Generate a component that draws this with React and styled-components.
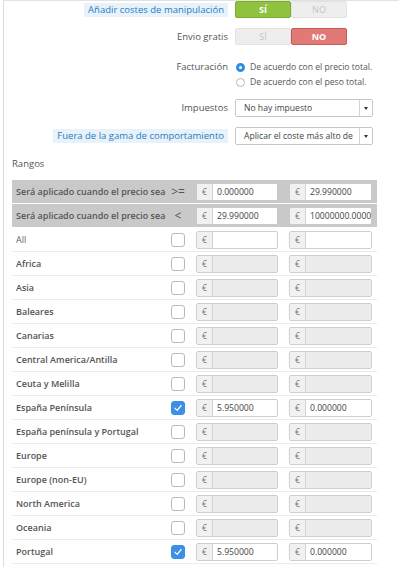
import React from 'react'
import styled, { createGlobalStyle } from 'styled-components'

const GlobalStyle = createGlobalStyle`
  body {
    margin: 0;
    background: #fff;
    font-family: "Open Sans", "Liberation Sans", sans-serif;
    font-size: 9px;
    color: #555;
  }
  * { box-sizing: border-box; }
`

const Panel = styled.div`
  margin-left: 3px;
  border-left: 1px solid #dcdcdc;
  border-top: 1px solid #e2e2e2;
  padding: 0 0 0 8px;
  min-height: 567px;
`

const FormRow = styled.div`
  display: grid;
  grid-template-columns: 216px auto;
  column-gap: 7px;
  align-items: ${p => (p.$top ? 'start' : 'center')};
  margin-top: ${p => p.$mt || 0}px;
`

const Label = styled.div`
  justify-self: end;
  font-size: 9.5px;
  line-height: 14px;
  color: ${p => (p.$hint ? '#2b7bbf' : '#555')};
  background: ${p => (p.$hint ? '#e7f2fa' : 'transparent')};
  padding: 0 ${p => (p.$hint ? 4 : 0)}px;
  white-space: nowrap;
`

const Toggle = styled.div`
  display: flex;
  width: 112px;
  height: 17px;
`

const ToggleHalf = styled.div`
  flex: 1;
  display: flex;
  align-items: center;
  justify-content: center;
  font-size: 9px;
  font-weight: ${p => (p.$on ? 700 : 400)};
  color: ${p => (p.$on ? '#fff' : '#c4c4c4')};
  background: ${p => (p.$on ? p.$color : '#eeeeee')};
  border: 1px solid ${p => (p.$on ? p.$border : '#e2e2e2')};
  border-radius: 2px;
`

const Radios = styled.div`
  display: flex;
  flex-direction: column;
  gap: 1px;
`

const RadioLine = styled.div`
  display: flex;
  align-items: center;
  gap: 5px;
  height: 14px;
  font-size: 8.6px;
  color: #555;
`

const RadioDot = styled.span`
  width: 9px;
  height: 9px;
  border-radius: 50%;
  margin-left: 1px;
  border: ${p => (p.$checked ? '3px solid #2d8ee4' : '1px solid #b8b8b8')};
  background: #fff;
`

const Select = styled.div`
  display: flex;
  align-items: center;
  width: 138px;
  height: 18px;
  border: 1px solid #c8c8c8;
  border-radius: 2px;
  background: #fff;
  font-size: 8.6px;
  color: #444;
`

const SelectText = styled.span`
  flex: 1;
  padding-left: 8px;
  white-space: nowrap;
  overflow: hidden;
`

const SelectArrow = styled.span`
  width: 13px;
  height: 100%;
  border-left: 1px solid #d4d4d4;
  display: flex;
  align-items: center;
  justify-content: center;
  &::after {
    content: '';
    border-left: 2.5px solid transparent;
    border-right: 2.5px solid transparent;
    border-top: 3px solid #333;
  }
`

const Heading = styled.div`
  margin-top: 12px;
  font-size: 9.5px;
  line-height: 14px;
  color: #555;
`

const Table = styled.div`
  margin-top: 9px;
  width: 365px;
`

const Row = styled.div`
  display: grid;
  grid-template-columns: 144px 14px 82px 83px;
  column-gap: 11px;
  align-items: center;
  height: 24px;
  padding-left: 4px;
  background: ${p => (p.$head ? '#c9c9c9' : '#fff')};
  border-bottom: 1px solid ${p => (p.$head ? '#fff' : '#ebebeb')};
`

const RowLabel = styled.div`
  font-size: 9px;
  font-weight: ${p => (p.$plain ? 400 : 600)};
  color: ${p => (p.$plain ? '#666' : '#555')};
  white-space: nowrap;
  margin-top: -1px;
`

const Operator = styled.div`
  justify-self: center;
  font-size: 12px;
  color: #555;
  white-space: nowrap;
`

const Check = styled.span`
  width: 14px;
  height: 14px;
  border-radius: 3px;
  border: 1px solid ${p => (p.$checked ? '#3b8fe5' : '#b9b9b9')};
  background: ${p => (p.$checked ? '#3b8fe5' : '#fff')};
  display: flex;
  align-items: center;
  justify-content: center;
`

const InputGroup = styled.div`
  display: flex;
  height: 18px;
  border: 1px solid ${p => (p.$head ? '#c9c9c9' : '#cfcfcf')};
  border-radius: 2px;
  overflow: hidden;
`

const Addon = styled.span`
  width: 16px;
  display: flex;
  align-items: center;
  justify-content: center;
  font-size: 8.5px;
  color: #777;
  background: #f1f1f1;
  border-right: 1px solid #d3d3d3;
`

const Field = styled.span`
  flex: 1;
  display: flex;
  align-items: center;
  padding-left: 4px;
  font-size: 8.6px;
  color: #444;
  white-space: nowrap;
  overflow: hidden;
  background: ${p => (p.$disabled ? '#ececec' : '#fff')};
`

const Tick = () => (
  <svg width="10" height="10" viewBox="0 0 10 10">
    <path d="M2 5.2 L4.2 7.4 L8.2 2.4" fill="none" stroke="#fff" strokeWidth="1.3" strokeLinecap="round" strokeLinejoin="round" />
  </svg>
)

const Money = ({ value, head }) => (
  <InputGroup $head={head}>
    <Addon>€</Addon>
    <Field $disabled={value === null}>{value}</Field>
  </InputGroup>
)

const zones = [
  ['Africa'],
  ['Asia'],
  ['Baleares'],
  ['Canarias'],
  ['Central America/Antilla'],
  ['Ceuta y Melilla'],
  ['España Península', '5.950000', '0.000000'],
  ['España península y Portugal'],
  ['Europe'],
  ['Europe (non-EU)'],
  ['North America'],
  ['Oceania'],
  ['Portugal', '5.950000', '0.000000'],
]

export default function App() {
  return (
    <>
      <GlobalStyle />
      <Panel>
        <FormRow>
          <Label $hint>Añadir costes de manipulación</Label>
          <Toggle>
            <ToggleHalf $on $color="#8fc23f" $border="#7aab2f">SÍ</ToggleHalf>
            <ToggleHalf>NO</ToggleHalf>
          </Toggle>
        </FormRow>
        <FormRow $mt={10}>
          <Label>Envio gratis</Label>
          <Toggle>
            <ToggleHalf>SÍ</ToggleHalf>
            <ToggleHalf $on $color="#e17a76" $border="#c85a55">NO</ToggleHalf>
          </Toggle>
        </FormRow>
        <FormRow $mt={15} $top>
          <Label>Facturación</Label>
          <Radios>
            <RadioLine><RadioDot $checked />De acuerdo con el precio total.</RadioLine>
            <RadioLine><RadioDot />De acuerdo con el peso total.</RadioLine>
          </Radios>
        </FormRow>
        <FormRow $mt={10}>
          <Label>Impuestos</Label>
          <Select>
            <SelectText>No hay impuesto</SelectText>
            <SelectArrow />
          </Select>
        </FormRow>
        <FormRow $mt={10}>
          <Label $hint>Fuera de la gama de comportamiento</Label>
          <Select>
            <SelectText>Aplicar el coste más alto de</SelectText>
            <SelectArrow />
          </Select>
        </FormRow>

        <Heading>Rangos</Heading>
        <Table>
          <Row $head>
            <RowLabel>Será aplicado cuando el precio sea</RowLabel>
            <Operator>&gt;=</Operator>
            <Money head value="0.000000" />
            <Money head value="29.990000" />
          </Row>
          <Row $head>
            <RowLabel>Será aplicado cuando el precio sea</RowLabel>
            <Operator>&lt;</Operator>
            <Money head value="29.990000" />
            <Money head value="10000000.000000" />
          </Row>
          <Row>
            <RowLabel $plain>All</RowLabel>
            <Check />
            <Money value="" />
            <Money value="" />
          </Row>
          {zones.map(([name, a, b]) => (
            <Row key={name}>
              <RowLabel>{name}</RowLabel>
              <Check $checked={!!a}>{a && <Tick />}</Check>
              <Money value={a || null} />
              <Money value={b || null} />
            </Row>
          ))}
        </Table>
      </Panel>
    </>
  )
}
